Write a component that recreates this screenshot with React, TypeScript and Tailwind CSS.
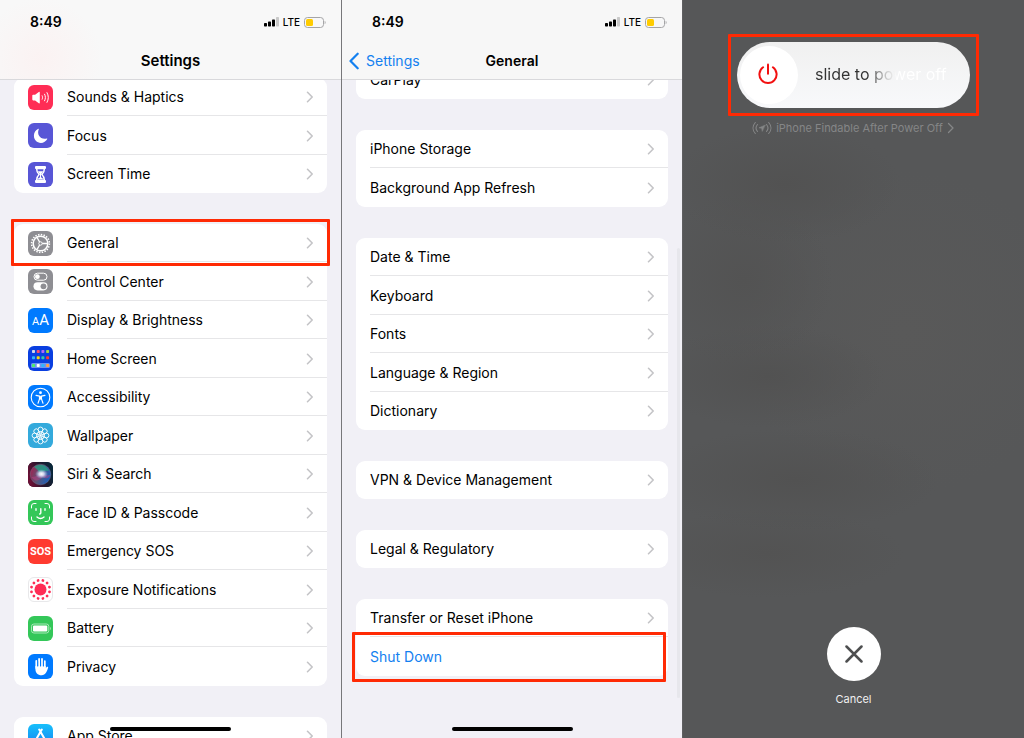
import React from 'react';

interface SettingsItem {
  label: string;
  icon?: React.ReactNode;
  highlight?: string;
  isAction?: boolean;
}

interface SettingsGroupProps {
  items: SettingsItem[];
}

interface IconTileProps {
  className: string;
  children: React.ReactNode;
}

// Rounded square behind every settings icon
const IconTile: React.FC<IconTileProps> = ({ className, children }) => (
  <span
    aria-hidden="true"
    className={`flex h-[25px] w-[25px] shrink-0 items-center justify-center self-center overflow-hidden rounded-md ${className}`}
  >
    {children}
  </span>
);

const SoundsIcon = () => (
  <IconTile className="bg-[#ff2d55]">
    <svg viewBox="0 0 25 25" className="h-full w-full" fill="none" stroke="white" strokeLinecap="round">
      <path d="M4.3 10.6c0-.5.3-.8.8-.8h2l3.7-2.9c.5-.4 1-.1 1 .5v10.4c0 .6-.5.9-1 .5l-3.7-2.9h-2c-.5 0-.8-.3-.8-.8z" fill="white" stroke="none" />
      <path d="M14.2 10.8c.5 1.1.5 2.3 0 3.4" strokeWidth="1" />
      <path d="M16.6 9.2c1.1 2.1 1.1 4.5 0 6.6" strokeWidth="1" />
      <path d="M19 7.6c1.8 3.1 1.8 6.7 0 9.8" strokeWidth="1" />
    </svg>
  </IconTile>
);

const FocusIcon = () => (
  <IconTile className="bg-[#5856d6]">
    <svg viewBox="0 0 25 25" className="h-full w-full">
      <path d="M10.3 5.7c.3-.2.7.1.5.5-2.4 5.6 2 10.9 8 9.2.4-.1.7.2.5.6-1.2 2.4-3.7 3.9-6.4 3.9-4 0-7-3.2-7-7.1 0-3.2 1.7-5.9 4.400-7.100z" fill="white" />
    </svg>
  </IconTile>
);

const ScreenTimeIcon = () => (
  <IconTile className="bg-[#5856d6]">
    <svg viewBox="0 0 25 25" className="h-full w-full">
      <rect x="7" y="4" width="11" height="3" rx="1" fill="white" />
      <rect x="7" y="18" width="11" height="3" rx="1" fill="white" />
      <path d="M8.600 6.500h7.800c0 3.200-.8 4.500-2.500 6 1.700 1.500 2.500 2.800 2.500 6H8.600c0-3.200.8-4.500 2.500-6-1.700-1.500-2.500-2.800-2.500-6z" fill="none" stroke="white" strokeWidth="1.5" />
      <path d="M10 9.200h5c-.4 1.400-1 2.100-2 2.800v3.200c1 .5 1.800 1 2.300 2.300H9.700c.5-1.300 1.300-1.800 2.300-2.300V12c-1-.7-1.600-1.400-2-2.800z" fill="white" />
    </svg>
  </IconTile>
);

const GearIcon = () => (
  <IconTile className="bg-[#8e8e93]">
    <svg viewBox="0 0 25 25" className="h-full w-full" fill="none" stroke="white">
      <circle cx="12.5" cy="12.5" r="8.9" strokeWidth="1.6" strokeDasharray="1.5 1.296" />
      <circle cx="12.5" cy="12.5" r="7.3" strokeWidth="1.5" />
      <circle cx="12.5" cy="12.5" r="1.7" strokeWidth="1" />
      <path d="M14.200 12.500h5.300M11.600 11 9 6.500M11.600 14 9 18.500" strokeWidth="1.4" />
    </svg>
  </IconTile>
);

const ControlCenterIcon = () => (
  <IconTile className="bg-[#8e8e93]">
    <svg viewBox="0 0 25 25" className="h-full w-full">
      <rect x="6" y="4.200" width="13" height="7" rx="3.500" fill="none" stroke="white" strokeWidth="1" />
      <circle cx="9.400" cy="7.700" r="2.400" fill="white" />
      <rect x="5.500" y="13.200" width="14" height="8.200" rx="4.100" fill="white" />
      <circle cx="15.500" cy="17.300" r="2.900" fill="#8e8e93" />
    </svg>
  </IconTile>
);

const DisplayIcon = () => (
  <IconTile className="bg-[#007aff] font-['Roboto',sans-serif] text-white">
    <span className="flex items-baseline leading-none">
      <span className="text-[11px]">A</span>
      <span className="text-[15px]">A</span>
    </span>
  </IconTile>
);

const HomeScreenIcon = () => (
  <IconTile className="bg-[#0a3fe0]">
    <svg viewBox="0 0 25 25" className="h-full w-full">
      <rect x="3" y="17" width="19" height="5" rx="1.500" fill="#6f93f2" />
      <rect x="4" y="4" width="3" height="3" rx=".8" fill="#d3d8e6" />
      <rect x="8.700" y="4" width="3" height="3" rx=".8" fill="#ff4b6b" />
      <rect x="13.400" y="4" width="3" height="3" rx=".8" fill="#b267f5" />
      <rect x="18.100" y="4" width="3" height="3" rx=".8" fill="#a5d63f" />
      <rect x="4" y="10.200" width="3" height="3" rx=".8" fill="#2fb9f7" />
      <rect x="8.700" y="10.200" width="3" height="3" rx=".8" fill="#ffd60a" />
      <rect x="13.400" y="10.200" width="3" height="3" rx=".8" fill="#31c9a5" />
      <rect x="18.100" y="10.200" width="3" height="3" rx=".8" fill="#ff3b30" />
      <rect x="4" y="18" width="3" height="3" rx=".8" fill="#4cf06a" />
      <rect x="8.700" y="18" width="3" height="3" rx=".8" fill="#ffffff" />
      <rect x="13.400" y="18" width="3" height="3" rx=".8" fill="#2bb7ff" />
      <rect x="18.100" y="18" width="3" height="3" rx=".8" fill="#ff9f45" />
    </svg>
  </IconTile>
);

const AccessibilityIcon = () => (
  <IconTile className="bg-[#007aff]">
    <svg viewBox="0 0 25 25" className="h-full w-full" fill="none" stroke="white" strokeLinecap="round" strokeLinejoin="round">
      <circle cx="12.500" cy="12.500" r="9.300" strokeWidth="1.1" />
      <circle cx="12.500" cy="7.700" r="1.400" fill="white" stroke="none" />
      <path d="m8 10.400 3.500.7v2.900L10 18.300M17 10.400l-3.500.7v2.900l1.500 4.300" strokeWidth="1.1" />
      <path d="M11.800 11.200h1.400v3h-1.400z" fill="white" strokeWidth=".7" />
    </svg>
  </IconTile>
);

const petals = [0, 45, 90, 135, 180, 225, 270, 315];

const WallpaperIcon = () => (
  <IconTile className="bg-[#34aadc]">
    <svg viewBox="0 0 25 25" className="h-full w-full" fill="none" stroke="white" strokeWidth=".9">
      {petals.map((angle) => (
        <g key={angle} transform={`rotate(${angle} 12.500 12.500)`}>
          <circle cx="12.500" cy="6.500" r="2.400" />
          <circle cx="12.500" cy="10" r="1.200" strokeWidth=".7" />
        </g>
      ))}
      <circle cx="12.500" cy="12.500" r="1" fill="white" stroke="none" />
    </svg>
  </IconTile>
);

const SiriIcon = () => (
  <IconTile className="bg-[#1c1526]">
    <svg viewBox="0 0 25 25" className="h-full w-full">
      <defs>
        <linearGradient id="siri-tile" x1="0" y1=".6" x2="1" y2=".3">
          <stop offset="0" stopColor="#6d0f35" />
          <stop offset=".5" stopColor="#26152b" />
          <stop offset="1" stopColor="#06283a" />
        </linearGradient>
        <linearGradient id="siri-orb" x1="0" y1=".3" x2="1" y2=".7">
          <stop offset="0" stopColor="#a02352" />
          <stop offset=".45" stopColor="#5a5574" />
          <stop offset="1" stopColor="#155fc0" />
        </linearGradient>
        <radialGradient id="siri-glow">
          <stop offset="0" stopColor="#ffffff" />
          <stop offset=".4" stopColor="#e5e8fc" stopOpacity=".85" />
          <stop offset="1" stopColor="#9ab8f0" stopOpacity="0" />
        </radialGradient>
      </defs>
      <rect width="25" height="25" fill="url(#siri-tile)" />
      <circle cx="12.500" cy="12.500" r="10.300" fill="url(#siri-orb)" stroke="#7d7f9c" strokeWidth=".4" />
      <path d="M6 5c5-4 12-3 15 4-4-1-7 1-9 3-1-3-3-5-6-7z" fill="#1fa486" opacity=".75" />
      <path d="M3.500 15c4 0 6-2 9-3 3 2 6 1 10 1-2 4-5 4-8 2-3 4-8 5-11 0z" fill="#c63f87" opacity=".45" />
      <ellipse cx="13.500" cy="12" rx="6.500" ry="4.800" fill="url(#siri-glow)" />
    </svg>
  </IconTile>
);

const FaceIdIcon = () => (
  <IconTile className="bg-[#34c759]">
    <svg viewBox="0 0 25 25" className="h-full w-full" fill="none" stroke="white" strokeLinecap="round" strokeLinejoin="round">
      <path d="M3.500 8V6a2.500 2.500 0 0 1 2.500-2.500h2M17 3.500h2A2.500 2.500 0 0 1 21.500 6v2M21.500 17v2a2.500 2.500 0 0 1-2.500 2.500h-2M8 21.500H6A2.500 2.500 0 0 1 3.500 19v-2" strokeWidth="1" />
      <path d="M8 8.800v1.400M17 8.800v1.400M12.800 8.800v4.200c0 .7-.4 1-1.200 1M9 17c2 1.700 5 1.700 7 0" strokeWidth="1.400" />
    </svg>
  </IconTile>
);

const SosIcon = () => (
  <IconTile className="bg-[#ff3b30] font-['Roboto',sans-serif] text-[11px] leading-none font-bold text-white">
    SOS
  </IconTile>
);

const dots = [15, 45, 75, 105, 135, 165, 195, 225, 255, 285, 315, 345];

const ExposureIcon = () => (
  <IconTile className="border border-[#e8e8ea] bg-white">
    <svg viewBox="1 1 23 23" className="h-full w-full" fill="#ff2d55">
      <circle cx="12.500" cy="12.500" r="6" />
      {dots.map((angle) => (
        <circle key={angle} cx="12.500" cy="3.200" r="1.400" transform={`rotate(${angle} 12.500 12.500)`} />
      ))}
    </svg>
  </IconTile>
);

const BatteryIcon = () => (
  <IconTile className="bg-[#34c759]">
    <svg viewBox="0 0 25 25" className="h-full w-full">
      <rect x="3.500" y="8" width="17.300" height="9" rx="2.400" fill="none" stroke="#b5ebc3" strokeWidth=".9" />
      <rect x="5" y="9.500" width="14.300" height="6" rx="1.100" fill="white" />
      <path d="M22 11v3c1-.4 1-2.600 0-3z" fill="#b5ebc3" />
    </svg>
  </IconTile>
);

const PrivacyIcon = () => (
  <IconTile className="bg-[#007aff]">
    <svg viewBox="0 0 25 25" className="h-full w-full" fill="none" stroke="white" strokeLinecap="round">
      <path d="M8.300 7v7M11.100 4.900V14M14 5v9M16.800 7.200V14" strokeWidth="1.800" />
      <path d="M7.400 12h10.300v2.200l1-1.200c.6-.7 1.700-.3 1.400.7-.9 3-2.600 7.500-6.400 7.500-4.300 0-6.300-2.600-6.300-6.500z" fill="white" stroke="none" />
      <path d="M9.700 7.500v4.800M12.550 7v5.300M15.400 7.500v4.800" stroke="#007aff" strokeWidth=".7" />
    </svg>
  </IconTile>
);

const AppStoreIcon = () => (
  <IconTile className="bg-linear-to-b from-[#18c0fb] to-[#1e7bf0]">
    <svg viewBox="0 0 25 25" className="h-full w-full" stroke="white" strokeWidth="2" strokeLinecap="round">
      <path d="m13.800 5.500-6 10.500M11.200 5.500l7.300 12.700M4.500 15.500h9M17.500 15.500h3M7 18.200l-.5.800" />
    </svg>
  </IconTile>
);

const Chevron = () => (
  <svg viewBox="0 0 8 12" className="h-3 w-2 shrink-0" fill="none" stroke="#c4c4c7" strokeWidth="1.600" strokeLinecap="round" strokeLinejoin="round" aria-hidden="true">
    <path d="M1.500 1.300 6.200 6l-4.700 4.700" />
  </svg>
);

const StatusBar = () => (
  <div className="flex h-11 items-center justify-between pr-[15px] pl-[30px]">
    <span className="text-sm font-semibold">8:49</span>
    <div className="flex items-center gap-1">
      <svg viewBox="0 0 15 10" className="h-[10px] w-[15px]" aria-label="Signal">
        <rect x="0" y="6" width="3" height="3.500" rx=".7" fill="black" />
        <rect x="4" y="4.500" width="3" height="5" rx=".7" fill="black" />
        <rect x="8" y="2.500" width="3" height="7" rx=".7" fill="black" />
        <rect x="12" y="0" width="3" height="9.500" rx=".7" fill="#c9c9c9" />
      </svg>
      <span className="text-[10px] font-medium">LTE</span>
      <svg viewBox="0 0 22 11" className="h-[11px] w-[22px]" aria-label="Battery">
        <rect x=".5" y=".5" width="19" height="10" rx="3" fill="none" stroke="#a5a5a7" />
        <rect x="2" y="2" width="7" height="7" rx="1.500" fill="#ffcc00" />
        <path d="M20.700 3.800v3.400c1.200-.5 1.200-2.900 0-3.400z" fill="#a5a5a7" />
      </svg>
    </div>
  </div>
);

const HomeIndicator = () => (
  <div className="absolute inset-x-0 bottom-[7px] flex justify-center">
    <div className="h-1 w-[121px] rounded-full bg-black" />
  </div>
);

const SettingsGroup: React.FC<SettingsGroupProps> = ({ items }) => (
  <ul className="rounded-[9px] bg-white">
    {items.map((item) => (
      <li key={item.label} className="group relative h-[38px] even:h-[39px]">
        <a href="#" className="flex h-full gap-[14px] pl-[14px]">
          {item.icon}
          <span className="flex flex-1 items-center justify-between pr-[13px] shadow-[inset_0_-1px_0_#e6e6e8] group-last:shadow-none">
            <span className={item.isAction ? 'text-[#1380f0]' : 'text-black'}>{item.label}</span>
            {!item.isAction && <Chevron />}
          </span>
        </a>
        {item.highlight && (
          <div className={`pointer-events-none absolute z-10 rounded-[1px] border-3 border-[#ff2a04] ${item.highlight}`} />
        )}
      </li>
    ))}
  </ul>
);

const settingsGroups: SettingsItem[][] = [
  [
    { label: 'Sounds & Haptics', icon: <SoundsIcon /> },
    { label: 'Focus', icon: <FocusIcon /> },
    { label: 'Screen Time', icon: <ScreenTimeIcon /> }
  ],
  [
    { label: 'General', icon: <GearIcon />, highlight: '-inset-x-[3px] -top-[5px] -bottom-1' },
    { label: 'Control Center', icon: <ControlCenterIcon /> },
    { label: 'Display & Brightness', icon: <DisplayIcon /> },
    { label: 'Home Screen', icon: <HomeScreenIcon /> },
    { label: 'Accessibility', icon: <AccessibilityIcon /> },
    { label: 'Wallpaper', icon: <WallpaperIcon /> },
    { label: 'Siri & Search', icon: <SiriIcon /> },
    { label: 'Face ID & Passcode', icon: <FaceIdIcon /> },
    { label: 'Emergency SOS', icon: <SosIcon /> },
    { label: 'Exposure Notifications', icon: <ExposureIcon /> },
    { label: 'Battery', icon: <BatteryIcon /> },
    { label: 'Privacy', icon: <PrivacyIcon /> }
  ],
  [{ label: 'App Store', icon: <AppStoreIcon /> }]
];

const generalGroups: SettingsItem[][] = [
  [{ label: 'CarPlay' }],
  [{ label: 'iPhone Storage' }, { label: 'Background App Refresh' }],
  [
    { label: 'Date & Time' },
    { label: 'Keyboard' },
    { label: 'Fonts' },
    { label: 'Language & Region' },
    { label: 'Dictionary' }
  ],
  [{ label: 'VPN & Device Management' }],
  [{ label: 'Legal & Regulatory' }],
  [
    { label: 'Transfer or Reset iPhone' },
    { label: 'Shut Down', isAction: true, highlight: '-left-1 right-[2px] -top-[5px] -bottom-[6px]' }
  ]
];

const SettingsScreen = () => (
  <section className="relative flex min-w-0 flex-col overflow-hidden border-r border-[#77777a] bg-[#f1f0f6]">
    <header className="z-20 h-20 shrink-0 border-b border-[#d9d9dc] bg-[#f8f8f8] bg-[radial-gradient(circle_at_12%_75%,#fbf2f2,#f8f8f8_20%)]">
      <StatusBar />
      <h1 className="text-center text-[15px] leading-[34px] font-semibold">Settings</h1>
    </header>
    <main className="-mt-[2px] flex flex-col gap-[31px] px-[14px]">
      {settingsGroups.map((items) => (
        <SettingsGroup key={items[0].label} items={items} />
      ))}
    </main>
    <HomeIndicator />
  </section>
);

const GeneralScreen = () => (
  <section className="relative flex min-w-0 flex-col overflow-hidden border-r border-[#5f5f61] bg-[#f1f0f6]">
    <header className="z-20 h-20 shrink-0 border-b border-[#d9d9dc] bg-[#f7f7f7]">
      <StatusBar />
      <div className="grid grid-cols-3 items-center text-[15px] leading-[34px]">
        <a href="#" className="flex items-center gap-[7px] pl-[7px] text-sm leading-[34px] text-[#1380f0]">
          <svg viewBox="0 0 10 18" className="h-[18px] w-[10px]" fill="none" stroke="currentColor" strokeWidth="2.200" strokeLinecap="round" strokeLinejoin="round" aria-hidden="true">
            <path d="M8.700 1.700 1.500 9l7.200 7.300" />
          </svg>
          Settings
        </a>
        <h1 className="text-center text-sm leading-[34px] font-semibold">General</h1>
      </div>
    </header>
    <main className="-mt-[19px] flex flex-col gap-[31px] px-[14px]">
      {generalGroups.map((items) => (
        <SettingsGroup key={items[0].label} items={items} />
      ))}
    </main>
    {/* Scroll indicator */}
    <div className="absolute top-[248px] right-[2px] bottom-10 w-[3px] rounded-full bg-[#e7e7ec]" />
    <HomeIndicator />
  </section>
);

const PowerOffScreen = () => (
  <section className="flex min-w-0 flex-col items-center bg-[#565758] bg-[radial-gradient(ellipse_34%_8%_at_30%_25%,#525252,transparent),radial-gradient(ellipse_26%_12%_at_18%_38%,#535353,transparent),radial-gradient(ellipse_34%_7%_at_25%_51%,#525252,transparent),radial-gradient(ellipse_42%_7%_at_33%_65%,#525252,transparent),radial-gradient(ellipse_40%_6%_at_25%_75%,#535353,transparent),radial-gradient(ellipse_50%_22%_at_65%_45%,#595959,transparent)] pt-[42px] pb-[30px]">
    <div className="relative h-[66px] w-[233px]">
      <input
        id="power-off"
        type="range"
        defaultValue={0}
        className="block h-full w-full appearance-none rounded-full bg-linear-to-b from-[#f0f0f0] to-[#f8f9fb] px-[3px] [&::-webkit-slider-thumb]:h-[58px] [&::-webkit-slider-thumb]:w-[58px] [&::-webkit-slider-thumb]:appearance-none [&::-webkit-slider-thumb]:rounded-full [&::-webkit-slider-thumb]:bg-white"
      />
      <div className="pointer-events-none absolute inset-x-0 top-0 flex h-16 items-center pl-5">
        <svg viewBox="0 0 22 22" className="h-[22px] w-[22px]" fill="none" stroke="#f21010" strokeWidth="2" strokeLinecap="round" aria-hidden="true">
          <path d="M6.100 4.300a8.600 8.600 0 1 0 9.800 0" />
          <path d="M11 1.500v9.200" />
        </svg>
        <label
          htmlFor="power-off"
          className="ml-9 bg-linear-to-r from-[#333] from-40% via-[#bbb] via-52% to-white to-62% bg-clip-text text-base text-transparent"
        >
          slide to power off
        </label>
      </div>
      <div className="pointer-events-none absolute -inset-x-[9px] -inset-y-2 rounded-[1px] border-3 border-[#ff2a04]" />
    </div>
    <a href="#" className="mt-[11px] flex items-center gap-1 text-[11px] leading-[18px] text-[#858687]">
      <svg viewBox="0 0 20 14" className="h-[14px] w-5" fill="none" stroke="currentColor" strokeWidth="1.100" strokeLinecap="round" aria-hidden="true">
        <path d="M3.300 1.500c-3 3.300-3 7.700 0 11M16.700 1.500c3 3.300 3 7.700 0 11M5.500 3.500c-1.800 2.100-1.800 4.900 0 7M14.500 3.500c1.800 2.100 1.800 4.900 0 7" />
        <path d="m13 4.200-6 2.600 2.700.5.500 2.700z" fill="currentColor" strokeWidth=".6" />
      </svg>
      iPhone Findable After Power Off
      <svg viewBox="0 0 8 12" className="h-3 w-2" fill="none" stroke="currentColor" strokeWidth="1.300" strokeLinecap="round" strokeLinejoin="round" aria-hidden="true">
        <path d="M1.500 1.500 6 6l-4.500 4.500" />
      </svg>
    </a>
    <button type="button" className="mt-auto flex flex-col items-center gap-[9px]">
      <span className="flex h-[54px] w-[54px] items-center justify-center rounded-full bg-white">
        <svg viewBox="0 0 18 18" className="h-[18px] w-[18px]" stroke="#4e4f50" strokeWidth="2.500" strokeLinecap="round" aria-hidden="true">
          <path d="m1.500 1.500 15 15M16.500 1.500l-15 15" />
        </svg>
      </span>
      <span className="text-[11px] leading-[18px] text-[#f0f0f0]">Cancel</span>
    </button>
  </section>
);

const App: React.FC = () => {
  return (
    <div className="grid h-screen grid-cols-[342fr_341fr_341fr] overflow-hidden font-['Inter',sans-serif] text-sm text-black">
      <SettingsScreen />
      <GeneralScreen />
      <PowerOffScreen />
    </div>
  );
};

export default App;
